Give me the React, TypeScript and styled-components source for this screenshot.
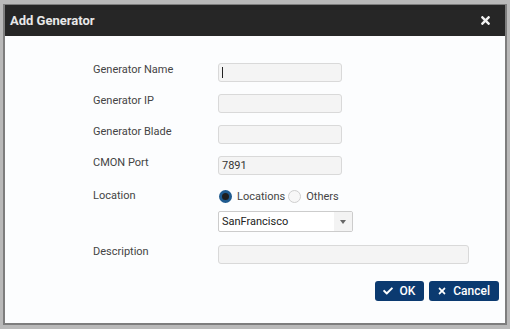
import styled, { createGlobalStyle } from 'styled-components'
import { FaCheck, FaTimes } from 'react-icons/fa'

const Global = createGlobalStyle`
  html, body { margin: 0; padding: 0; }
  body { background: #b9b9b9; font-family: Roboto, "Liberation Sans", sans-serif; width: 510px; height: 329px; overflow: hidden; }
`

const Frame = styled.div`
  box-sizing: border-box;
  margin: 4px 0 0 3px;
  width: 504px;
  height: 321px;
  border: 2px solid #7d7d7d;
  border-top-width: 1px;
  background: #fcfdfe;
  display: flex;
  flex-direction: column;
`

const Header = styled.div`
  height: 31px;
  background: #262626;
  display: flex;
  align-items: center;
  justify-content: space-between;
  padding: 0 13px 0 5px;
  color: #fff;
`

const Title = styled.h1`
  margin: 0;
  font-size: 13px;
  font-weight: 700;
  color: #e8e8e8;
`

const Close = styled.span`
  display: flex;
  color: #f2f2f2;
  font-size: 13px;
`

const Body = styled.div`
  padding: 27px 6px 0 88px;
  display: flex;
  flex-direction: column;
`

const Row = styled.div<{ $mb: number }>`
  display: grid;
  grid-template-columns: 125px 1fr;
  align-items: start;
  margin-bottom: ${p => p.$mb}px;
`

const Label = styled.div<{ $pt?: number }>`
  font-size: 11px;
  line-height: 14px;
  color: #444;
  padding-top: ${p => p.$pt ?? 0}px;
`

const Input = styled.div<{ $w?: number }>`
  box-sizing: border-box;
  width: ${p => p.$w ?? 124}px;
  height: 19px;
  border: 1px solid #d9d9d9;
  border-radius: 3px;
  background: #f4f4f4;
  font-size: 11px;
  color: #333;
  padding: 0 3px;
  line-height: 17px;
  display: flex;
  align-items: center;
`

const Caret = styled.span`
  width: 1px;
  height: 11px;
  background: #222;
`

const Radios = styled.div`
  display: flex;
  align-items: center;
  height: 18px;
  font-size: 11px;
  color: #444;
`

const Radio = styled.span<{ $on?: boolean }>`
  box-sizing: border-box;
  width: 13px;
  height: 13px;
  border-radius: 50%;
  margin: 0 5px 0 1px;
  border: ${p => (p.$on ? '3px solid #1f5a8e' : '1px solid #cfcfcf')};
  background: ${p => (p.$on ? '#1e1e1e' : '#f7f7f7')};
`

const Gap = styled.span`
  width: 2px;
`

const Select = styled.div`
  box-sizing: border-box;
  width: 135px;
  height: 21px;
  border: 1px solid #cccccc;
  border-radius: 2px;
  background: #fff;
  display: flex;
  font-size: 11px;
  color: #222;
`

const SelectText = styled.span`
  flex: 1;
  padding-left: 3px;
  line-height: 19px;
`

const Arrow = styled.span`
  width: 18px;
  background: #f3f3f3;
  display: flex;
  align-items: center;
  justify-content: center;
  &::after {
    content: '';
    border-left: 3.5px solid transparent;
    border-right: 3.5px solid transparent;
    border-top: 4px solid #666;
  }
`

const Actions = styled.div`
  display: flex;
  justify-content: flex-end;
  gap: 5px;
`

const Button = styled.button`
  height: 20px;
  border: none;
  border-radius: 3px;
  background: #0b3a70;
  color: #fff;
  font-family: Roboto, "Liberation Sans", sans-serif;
  font-size: 12px;
  font-weight: 500;
  display: flex;
  align-items: center;
  gap: 6px;
  padding: 0 9px 0 8px;
  svg { font-size: 10px; }
`

export default function App() {
  return (
    <>
      <Global />
      <Frame>
        <Header>
          <Title>Add Generator</Title>
          <Close><FaTimes /></Close>
        </Header>
        <Body>
          <Row $mb={12}>
            <Label>Generator Name</Label>
            <Input><Caret /></Input>
          </Row>
          <Row $mb={12}>
            <Label>Generator IP</Label>
            <Input />
          </Row>
          <Row $mb={12}>
            <Label>Generator Blade</Label>
            <Input />
          </Row>
          <Row $mb={12}>
            <Label>CMON Port</Label>
            <Input>7891</Input>
          </Row>
          <Row $mb={6}>
            <Label $pt={2}>Location</Label>
            <Radios>
              <Radio $on />Locations<Gap /><Radio />Others
            </Radios>
          </Row>
          <Row $mb={13}>
            <span />
            <Select>
              <SelectText>SanFrancisco</SelectText>
              <Arrow />
            </Select>
          </Row>
          <Row $mb={17}>
            <Label>Description</Label>
            <Input $w={251} />
          </Row>
          <Actions>
            <Button><FaCheck />OK</Button>
            <Button><FaTimes />Cancel</Button>
          </Actions>
        </Body>
      </Frame>
    </>
  )
}
